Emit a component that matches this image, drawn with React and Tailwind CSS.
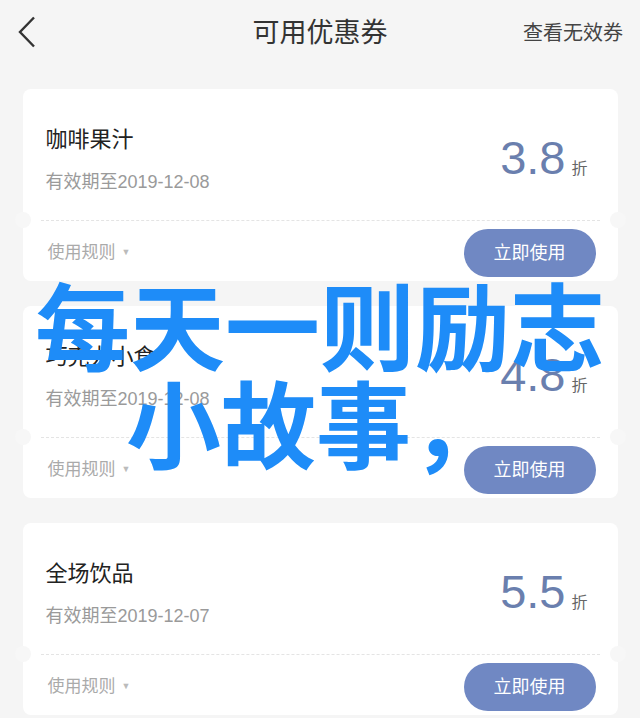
import React from "react";

const coupons = [
  { name: "咖啡果汁", date: "有效期至2019-12-08", rate: "3.8" },
  { name: "巧克力小食", date: "有效期至2019-12-08", rate: "4.8" },
  { name: "全场饮品", date: "有效期至2019-12-07", rate: "5.5" },
];

const font = { fontFamily: "'Liberation Sans', 'Noto Sans CJK SC', sans-serif" };

const CouponCard = ({ name, date, rate }) => (
  <div className="relative h-[192px] w-[595px] rounded-lg bg-white">
    {/* upper part */}
    <div className="flex h-[131px] items-center justify-between pl-[23px] pr-[30px]">
      <div className="flex flex-col self-start pt-[37px]">
        <span className="text-[22px] leading-[28px] text-[#222]">{name}</span>
        <span className="mt-[16px] text-[18px] leading-[24px] text-[#9a9a9a]">{date}</span>
      </div>
      <div className="flex items-baseline pt-[6px]">
        <span className="text-[47px] leading-none text-[#6a7fae]">{rate}</span>
        <span className="ml-[6px] text-[16px] text-[#666]">折</span>
      </div>
    </div>

    {/* tear line with notches */}
    <div className="mx-[18px] border-t border-dashed border-[#e4e4e4]" />
    <div className="absolute left-[-8px] top-[123px] h-4 w-4 rounded-full bg-[#f7f7f7]" />
    <div className="absolute right-[-8px] top-[123px] h-4 w-4 rounded-full bg-[#f7f7f7]" />

    {/* lower part */}
    <div className="flex items-center justify-between pl-[25px] pr-[22px] pt-[8px]">
      <div className="flex items-center text-[#aaa]">
        <span className="text-[17px]">使用规则</span>
        <span className="ml-[6px] text-[9px] text-[#bbb]">▼</span>
      </div>
      <button className="flex h-[48px] w-[132px] items-center justify-center rounded-full bg-[#7088c3] text-[18px] text-white">
        立即使用
      </button>
    </div>
  </div>
);

const App = () => {
  return (
    <div className="relative h-[718px] w-[640px] overflow-hidden bg-[#f5f5f5]" style={font}>
      {/* header */}
      <div className="relative flex h-[66px] items-center justify-center">
        <svg
          className="absolute left-[18px] top-[16px]"
          width="18"
          height="32"
          viewBox="0 0 18 32"
          fill="none"
        >
          <polyline points="16,1.5 2,16 16,30.5" stroke="#333" strokeWidth="2.4" />
        </svg>
        <span className="text-[27px] text-[#333]">可用优惠券</span>
        <span className="absolute right-[17px] text-[20px] text-[#444]">查看无效券</span>
      </div>

      {/* coupon list */}
      <div className="mt-[23px] flex flex-col items-center gap-[25px]">
        {coupons.map((c) => (
          <CouponCard key={c.rate} {...c} />
        ))}
      </div>

      {/* overlay caption */}
      <div
        className="pointer-events-none absolute left-0 right-0 top-[274px] text-center text-[95px] font-bold leading-[98px] text-[#1e8cf8]"
        style={{ fontFamily: "'Noto Sans CJK SC', sans-serif" }}
      >
        <div>每天一则励志</div>
        <div className="pr-[8px]">小故事，</div>
      </div>
    </div>
  );
};

export default App;
